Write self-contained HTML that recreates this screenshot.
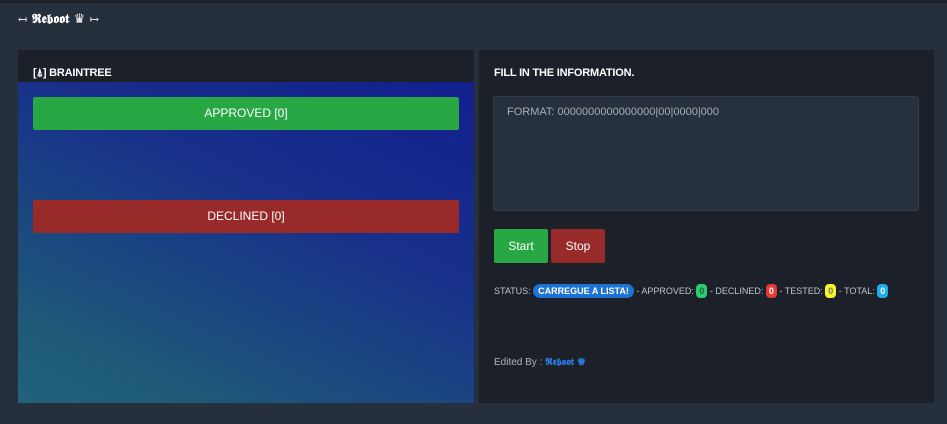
<!DOCTYPE html>
<html><head><meta charset="utf-8"><style>
*{box-sizing:border-box;margin:0;padding:0}
body{width:947px;height:424px;background:#262f3c;font-family:"Liberation Sans","DejaVu Sans",sans-serif;position:relative;overflow:hidden}
.topline{position:absolute;left:0;top:0;width:947px;height:3px;background:#1c2129}
.title{position:absolute;left:18px;top:12px;color:#fff;font-size:13px;font-weight:bold;font-family:"DejaVu Serif","DejaVu Sans",serif}
.title small{font-size:11px;font-weight:normal}
.panel{position:absolute;top:50px;height:353px;background:#1b2029}
.l{left:18px;width:456px}
.r{left:479px;width:455px}
.h{position:absolute;font-size:11px;font-weight:bold;color:#fff;letter-spacing:-0.2px}
.grad{position:absolute;left:0;top:32px;width:456px;height:321px;background:linear-gradient(205deg,#121f8e 0%,#18318a 40%,#1e5a78 85%,#22627a 100%)}
.bar{position:absolute;left:15px;width:426px;height:33px;color:#fff;font-size:12px;text-align:center;line-height:33px;border-radius:2px}
.ta{position:absolute;left:14px;top:46px;width:426px;height:115px;background:#27303d;border:1px solid #323c4a;border-radius:3px;color:#a9aeb5;font-size:11px;padding:9px 13px}
.btn{position:absolute;top:179px;height:34px;color:#fff;font-size:12px;line-height:34px;text-align:center;border-radius:2px}
.st{position:absolute;left:15px;top:234px;font-size:9px;color:#c0c4ca;white-space:nowrap}
.b{display:inline-block;color:#fff;border-radius:4px;padding:1px 3px;font-weight:bold;line-height:12px}
.ed{position:absolute;left:15px;top:307px;font-size:10px;color:#b0b5bc}
</style></head><body>
<div class="topline"></div>
<div class="title"><small>↤</small> 𝕽𝖊𝖇𝖔𝖔𝖙 ♛ <small>↦</small></div>
<div class="panel l">
<div class="h" style="left:15px;top:17px">[⍋] BRAINTREE</div>
<div class="grad"></div>
<div class="bar" style="top:47px;background:#28a745">APPROVED [0]</div>
<div class="bar" style="top:150px;background:#992a2a">DECLINED [0]</div>
</div>
<div class="panel r">
<div class="h" style="left:15px;top:17px">FILL IN THE INFORMATION.</div>
<div class="ta">FORMAT: 0000000000000000|00|0000|000</div>
<div class="btn" style="left:15px;width:54px;background:#28a745">Start</div>
<div class="btn" style="left:72px;width:54px;background:#992a2a">Stop</div>
<div class="st">STATUS: <span class="b" style="background:#1e73d2;border-radius:7px;padding:1px 5px">CARREGUE A LISTA!</span> - APPROVED: <span class="b" style="background:#2ecc71;color:#146b38">0</span> - DECLINED: <span class="b" style="background:#e53935">0</span> - TESTED: <span class="b" style="background:#f5f52a;color:#777">0</span> - TOTAL: <span class="b" style="background:#1eaee8">0</span></div>
<div class="ed">Edited By : <span style="color:#2b7de0;font-weight:bold;font-family:'DejaVu Serif',serif">𝕽𝖊𝖇𝖔𝖔𝖙 ♛</span></div>
</div>
</body></html>
